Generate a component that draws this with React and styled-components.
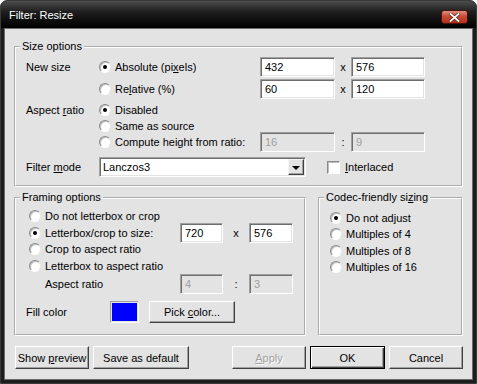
import styled, { createGlobalStyle } from 'styled-components';

const GlobalStyle = createGlobalStyle`
  html, body {
    margin: 0;
    padding: 0;
    background: #fff;
  }
  body {
    font-family: "Liberation Sans", Arial, sans-serif;
    font-size: 11px;
    color: #000;
  }
`;

const Window = styled.div`
  width: 477px;
  height: 384px;
  box-sizing: border-box;
  display: flex;
  flex-direction: column;
  background: #1d1d1d;
  border: 1px solid #3a3a3a;
  border-radius: 7px 7px 0 0;
  overflow: hidden;
`;

const TitleBar = styled.div`
  height: 27px;
  flex-shrink: 0;
  box-sizing: border-box;
  display: flex;
  align-items: center;
  justify-content: space-between;
  padding: 2px 8px 0 8px;
  background: linear-gradient(180deg, #4d4d4d 0%, #1e1e1e 40%, #000 100%);
`;

const Title = styled.span`
  color: #fff;
  font-size: 11px;
  line-height: 13px;
`;

const CloseButton = styled.div`
  width: 27px;
  height: 14px;
  margin-top: 3px;
  box-sizing: border-box;
  border: 1px solid #4a120a;
  border-radius: 3px;
  background: linear-gradient(180deg, #e0907f 0%, #c94a35 45%, #b0301c 100%);
  display: flex;
  align-items: center;
  justify-content: center;
`;

const Client = styled.div`
  flex: 1;
  margin: 0 3px 3px;
  background: #e3e3e3;
  border: 1px solid #6b6b6b;
  display: flex;
  flex-direction: column;
  padding: 11px 9px 10px;
`;

const Group = styled.fieldset`
  margin: 0;
  padding: 0;
  min-width: 0;
  border: 2px groove #fff;
`;

const Legend = styled.legend`
  margin-left: 4px;
  padding: 0 2px;
  font-size: 11px;
  line-height: 13px;
`;

const GroupBody = styled.div`
  display: flex;
  flex-direction: column;
  padding: ${p => p.$pad};
`;

const OptionGrid = styled.div`
  display: grid;
  grid-template-columns: ${p => p.$cols};
  grid-template-rows: ${p => p.$rows};
  row-gap: ${p => p.$gap || 0}px;
  align-items: center;
  margin-top: ${p => p.$top || 0}px;
`;

const Label = styled.span`
  white-space: nowrap;
  padding-left: ${p => p.$indent || 0}px;
`;

const Sep = styled.span`
  text-align: center;
`;

const RadioRow = styled.label`
  display: flex;
  align-items: center;
  gap: 4px;
  white-space: nowrap;
`;

const RadioCircle = styled.span`
  width: 12px;
  height: 12px;
  box-sizing: border-box;
  flex-shrink: 0;
  border-radius: 50%;
  background: #fff;
  border: 1px solid;
  border-color: #8a8a8a #e8e8e8 #fff #8a8a8a;
  box-shadow: inset 1px 1px 0 #bdbdbd;
  display: flex;
  align-items: center;
  justify-content: center;
  &::after {
    content: '';
    width: 4px;
    height: 4px;
    border-radius: 50%;
    background: ${p => (p.$checked ? '#000' : 'transparent')};
  }
`;

const Radio = ({ checked, children }) => (
  <RadioRow>
    <RadioCircle $checked={checked} />
    <span>{children}</span>
  </RadioRow>
);

const Field = styled.input`
  box-sizing: border-box;
  width: ${p => p.$w}px;
  height: 20px;
  margin: ${p => (p.$tight ? '-2px 0' : '0')};
  padding: 0 0 0 4px;
  font: inherit;
  font-size: 11px;
  color: #000;
  background: #fff;
  border: 1px solid;
  border-color: #a0a0a0 #fff #fff #a0a0a0;
  box-shadow: inset 1px 1px 0 #6e6e6e, inset -1px -1px 0 #e3e3e3;
  outline: none;
  &:disabled {
    background: #e3e3e3;
    color: #a0a0a0;
    -webkit-text-fill-color: #a0a0a0;
  }
`;

const FilterRow = styled.div`
  display: flex;
  align-items: center;
  margin-top: 7px;
  height: 20px;
`;

const FilterLabel = styled.span`
  width: 73px;
  flex-shrink: 0;
`;

const Select = styled.div`
  width: 207px;
  height: 20px;
  box-sizing: border-box;
  display: flex;
  align-items: stretch;
  background: #fff;
  border: 1px solid;
  border-color: #a0a0a0 #fff #fff #a0a0a0;
  padding: 1px;
  box-shadow: inset 1px 1px 0 #6e6e6e, inset -1px -1px 0 #e3e3e3;
`;

const SelectValue = styled.span`
  flex: 1;
  padding-left: 2px;
  line-height: 16px;
`;

const ArrowBox = styled.span`
  width: 16px;
  box-sizing: border-box;
  background: #e3e3e3;
  border: 1px solid;
  border-color: #f4f4f4 #404040 #404040 #f4f4f4;
  box-shadow: inset -1px -1px 0 #a0a0a0;
  display: flex;
  align-items: center;
  justify-content: center;
  &::after {
    content: '';
    border-left: 4px solid transparent;
    border-right: 4px solid transparent;
    border-top: 4px solid #000;
    margin-top: 1px;
  }
`;

const CheckRow = styled.label`
  display: flex;
  align-items: center;
  gap: 5px;
  margin-left: 21px;
`;

const CheckBox = styled.span`
  width: 13px;
  height: 13px;
  box-sizing: border-box;
  background: #fff;
  border: 1px solid;
  border-color: #8a8a8a #fff #fff #8a8a8a;
  box-shadow: inset 1px 1px 0 #bdbdbd;
`;

const LowerRow = styled.div`
  display: grid;
  grid-template-columns: 292px 1fr;
  column-gap: 12px;
  margin-top: 4px;
`;

const FillRow = styled.div`
  display: flex;
  align-items: center;
  margin-top: 7px;
  margin-left: -3px;
  height: 22px;
`;

const FillLabel = styled.span`
  width: 84px;
`;

const Swatch = styled.span`
  width: 29px;
  height: 22px;
  box-sizing: border-box;
  border: 1px solid;
  border-color: #a0a0a0 #fff #fff #a0a0a0;
  padding: 1px;
  display: flex;
  &::after {
    content: '';
    flex: 1;
    background: ${p => p.$color};
  }
`;

const ButtonFrame = styled.div`
  box-sizing: border-box;
  width: ${p => p.$w}px;
  height: ${p => p.$h || 23}px;
  margin-left: ${p => p.$ml || 0}px;
  display: flex;
  align-items: center;
  justify-content: center;
  background: #e3e3e3;
  white-space: nowrap;
  color: ${p => (p.$disabled ? '#a0a0a0' : '#000')};
  text-shadow: ${p => (p.$disabled ? '1px 1px 0 #fff' : 'none')};
  border: 1px solid;
  border-color: ${p => (p.$default ? '#000' : '#fff #404040 #404040 #fff')};
  box-shadow: ${p =>
    p.$default
      ? 'inset 1px 1px 0 #fff, inset -1px -1px 0 #404040, inset -2px -2px 0 #a0a0a0'
      : 'inset -1px -1px 0 #a0a0a0'};
`;

const Button = ({ children, ...rest }) => (
  <ButtonFrame {...rest}>
    <span>{children}</span>
  </ButtonFrame>
);

const ButtonBar = styled.div`
  margin-top: auto;
  display: flex;
  justify-content: space-between;
`;

const ButtonGroup = styled.div`
  display: flex;
  gap: 4px;
`;

export default function App() {
  return (
    <>
      <GlobalStyle />
      <Window>
        <TitleBar>
          <Title>Filter: Resize</Title>
          <CloseButton>
            <svg width="11" height="9" viewBox="0 0 11 9">
              <path d="M1.5 1 L9.5 8 M9.5 1 L1.5 8" stroke="#5a1a10" strokeWidth="3.2" strokeLinecap="square" />
              <path d="M1.5 1 L9.5 8 M9.5 1 L1.5 8" stroke="#fff" strokeWidth="1.8" strokeLinecap="square" />
            </svg>
          </CloseButton>
        </TitleBar>
        <Client>
          <Group>
            <Legend>Size options</Legend>
            <GroupBody $pad="4px 10px 8px 10px">
              <OptionGrid $cols="73px 161px 75px 16px 74px" $rows="20px 20px" $gap={2}>
                <Label>New size</Label>
                <Radio checked>Absolute (pi<u>x</u>els)</Radio>
                <Field $w={75} defaultValue="432" readOnly />
                <Sep>x</Sep>
                <Field $w={74} defaultValue="576" readOnly />
                <span />
                <Radio>Re<u>l</u>ative (%)</Radio>
                <Field $w={75} defaultValue="60" readOnly />
                <Sep>x</Sep>
                <Field $w={74} defaultValue="120" readOnly />
              </OptionGrid>
              <OptionGrid $cols="73px 161px 75px 16px 74px" $rows="16px 16px 16px" $top={3}>
                <Label>Aspect <u>r</u>atio</Label>
                <Radio checked>Disabled</Radio>
                <span />
                <span />
                <span />
                <span />
                <Radio>Same as source</Radio>
                <span />
                <span />
                <span />
                <span />
                <Radio>Compute height from ratio:</Radio>
                <Field $w={75} $tight defaultValue="16" disabled />
                <Sep>:</Sep>
                <Field $w={74} $tight defaultValue="9" disabled />
              </OptionGrid>
              <FilterRow>
                <FilterLabel>Filter <u>m</u>ode</FilterLabel>
                <Select>
                  <SelectValue>Lanczos3</SelectValue>
                  <ArrowBox />
                </Select>
                <CheckRow>
                  <CheckBox />
                  <span><u>I</u>nterlaced</span>
                </CheckRow>
              </FilterRow>
            </GroupBody>
          </Group>
          <LowerRow>
            <Group>
              <Legend>Framing options</Legend>
              <GroupBody $pad="4px 0 11px 13px">
                <OptionGrid $cols="151px 43px 26px 44px" $rows="16.5px 16.5px 16.5px 16.5px 20px">
                  <Radio>Do not letterbox or crop</Radio>
                  <span />
                  <span />
                  <span />
                  <Radio checked>Letterbox/crop to size:</Radio>
                  <Field $w={43} $tight defaultValue="720" readOnly />
                  <Sep>x</Sep>
                  <Field $w={44} $tight defaultValue="576" readOnly />
                  <Radio>Crop to aspect ratio</Radio>
                  <span />
                  <span />
                  <span />
                  <Radio>Letterbox to aspect ratio</Radio>
                  <span />
                  <span />
                  <span />
                  <Label $indent={16}>Aspect ratio</Label>
                  <Field $w={43} defaultValue="4" disabled />
                  <Sep>:</Sep>
                  <Field $w={44} defaultValue="3" disabled />
                </OptionGrid>
                <FillRow>
                  <FillLabel>Fill color</FillLabel>
                  <Swatch $color="#0000ff" />
                  <Button $w={86} $h={22} $ml={10}>Pick <u>c</u>olor...</Button>
                </FillRow>
              </GroupBody>
            </Group>
            <Group>
              <Legend>Codec-friendly si<u>z</u>ing</Legend>
              <GroupBody $pad="5.5px 0 0 10px">
                <OptionGrid $cols="1fr" $rows="16.5px 16.5px 16.5px 16.5px">
                  <Radio checked>Do not adjust</Radio>
                  <Radio>Multiples of 4</Radio>
                  <Radio>Multiples of 8</Radio>
                  <Radio>Multiples of 16</Radio>
                </OptionGrid>
              </GroupBody>
            </Group>
          </LowerRow>
          <ButtonBar>
            <ButtonGroup>
              <Button $w={74} $ml={1}>Show <u>p</u>review</Button>
              <Button $w={96}>Save as default</Button>
            </ButtonGroup>
            <ButtonGroup>
              <Button $w={74} $disabled><u>A</u>pply</Button>
              <Button $w={75} $default>OK</Button>
              <Button $w={74}>Cancel</Button>
            </ButtonGroup>
          </ButtonBar>
        </Client>
      </Window>
    </>
  );
}
